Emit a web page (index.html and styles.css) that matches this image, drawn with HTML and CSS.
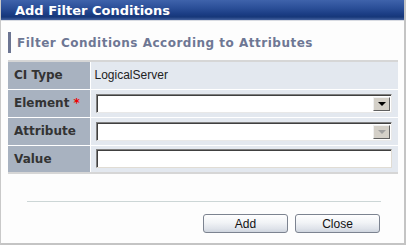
FILE: index.html
```html
<!DOCTYPE html>
<html lang="en">
<head>
    <meta charset="UTF-8">
    <title>Add Filter Conditions</title>
    <link rel="stylesheet" href="styles.css">
</head>
<body>
    <div class="dialog">
        <!-- title bar -->
        <div class="titlebar">Add Filter Conditions</div>

        <div class="dialog-body">
            <h2 class="section-title">Filter Conditions According to Attributes</h2>

            <table class="form-table">
                <tr>
                    <th>CI Type</th>
                    <td class="plain">LogicalServer</td>
                </tr>
                <tr>
                    <th>Element <span class="required">*</span></th>
                    <td>
                        <div class="combo">
                            <select class="combo-select"><option></option></select>
                            <span class="combo-arrow"></span>
                        </div>
                    </td>
                </tr>
                <tr>
                    <th>Attribute</th>
                    <td>
                        <div class="combo disabled">
                            <select class="combo-select" disabled><option></option></select>
                            <span class="combo-arrow"></span>
                        </div>
                    </td>
                </tr>
                <tr>
                    <th>Value</th>
                    <td><input class="text-input" type="text"></td>
                </tr>
            </table>

            <div class="separator"></div>

            <div class="buttons">
                <button class="btn">Add</button>
                <button class="btn">Close</button>
            </div>
        </div>
    </div>
</body>
</html>
```

FILE: styles.css
```css
* {
    margin: 0;
    padding: 0;
    box-sizing: border-box;
}

body {
    font-family: "Liberation Sans", Arial, sans-serif;
    font-size: 12px;
    background: #fff;
}

.dialog {
    width: 406px;
    height: 245px;
    border-left: 1px solid #c9c9c9;
    border-right: 2px solid #c4c4c4;
    border-bottom: 2px solid #c4c4c4;
    background: #fdfdfd;
}

/* title bar */
.titlebar {
    height: 21px;
    padding-left: 14px;
    line-height: 21px;
    color: #fff;
    font-family: "DejaVu Sans", sans-serif;
    font-weight: bold;
    font-size: 13px;
    background: linear-gradient(#3f63ab 0%, #2b4f98 40%, #1b3d84 70%, #163779 85%, #46639f 100%);
    border-bottom: 1px solid #d8dbe2;
}

.dialog-body {
    padding: 11px 6px 0 7px;
}

/* section heading */
.section-title {
    border-left: 3px solid #6c7592;
    padding-left: 6px;
    height: 21px;
    line-height: 22px;
    font-family: "DejaVu Sans", sans-serif;
    font-size: 12px;
    font-weight: bold;
    letter-spacing: 0.5px;
    color: #6e7794;
}

/* form table */
.form-table {
    margin-top: 7px;
    width: 390px;
    border-collapse: collapse;
    border-top: 2px solid #d6d6d6;
    border-bottom: 2px solid #d6d6d6;
}

.form-table th,
.form-table td {
    height: 28px;
    border-bottom: 1px solid #fff;
}

.form-table tr:last-child th,
.form-table tr:last-child td {
    border-bottom: none;
}

.form-table th {
    width: 82px;
    padding-left: 6px;
    text-align: left;
    font-family: "DejaVu Sans", sans-serif;
    font-size: 12px;
    color: #333;
    background: #a8b2c0;
    border-right: 1px solid #fff;
}

.form-table td {
    padding: 0 6px 0 5px;
    background: #e3e8ef;
}

.form-table td.plain {
    padding-left: 4px;
    color: #222;
}

.required {
    color: #e00;
}

/* fake windows combo */
.combo {
    display: flex;
    height: 19px;
    border-top: 1px solid #808080;
    border-left: 1px solid #808080;
    border-right: 1px solid #e8e8e8;
    border-bottom: 1px solid #e8e8e8;
    box-shadow: inset 1px 1px 0 #404040;
    background: #fff;
}

.combo-select {
    flex: 1;
    appearance: none;
    border: none;
    background: transparent;
    outline: none;
}

.combo-arrow {
    width: 17px;
    margin: 2px 1px 1px 0;
    background: #d4d0c8;
    border-top: 1px solid #f0f0f0;
    border-left: 1px solid #f0f0f0;
    border-right: 1px solid #606060;
    border-bottom: 1px solid #606060;
    display: flex;
    align-items: center;
    justify-content: center;
}

.combo-arrow::after {
    content: "";
    border-left: 4px solid transparent;
    border-right: 4px solid transparent;
    border-top: 4px solid #000;
}

.combo.disabled .combo-arrow::after {
    border-top-color: #a0a0a0;
}

.text-input {
    display: block;
    width: 100%;
    height: 19px;
    border-top: 1px solid #808080;
    border-left: 1px solid #808080;
    border-right: 1px solid #e0dcd4;
    border-bottom: 1px solid #e0dcd4;
    box-shadow: inset 1px 1px 0 #404040;
    background: #fff;
    outline: none;
}

/* footer */
.separator {
    margin: 27px 17px 0 19px;
    border-top: 1px solid #ccd6d6;
}

.buttons {
    display: flex;
    justify-content: flex-end;
    gap: 7px;
    padding: 12px 18px 0 0;
}

.btn {
    width: 85px;
    height: 19px;
    font-family: "Liberation Sans", Arial, sans-serif;
    font-size: 12px;
    color: #111;
    border: 1px solid #7c8390;
    border-radius: 3px;
    background: linear-gradient(#ffffff 0%, #f1f3f6 45%, #dfe3ea 80%, #cfd5de 100%);
}
```
